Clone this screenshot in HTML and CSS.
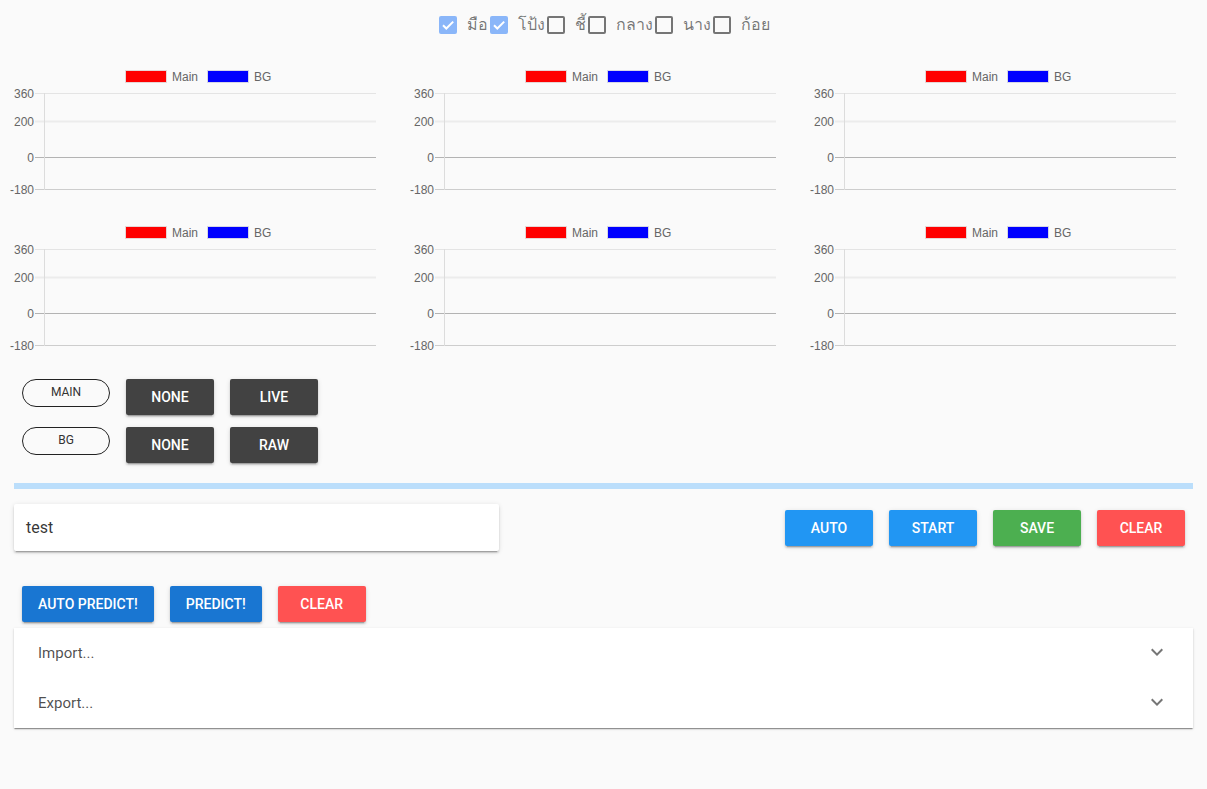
FILE: index.html
```html
<!DOCTYPE html>
<html>
<head>
<meta charset="utf-8">
<link rel="stylesheet" href="styles.css">
</head>
<body>
<div class="app">
  <div class="checks">
    <label class="cb"><span class="box on"><svg viewBox="0 0 18 18"><path d="M4 9.2l3.3 3.3L14.2 5.6" fill="none" stroke="#fff" stroke-width="2"/></svg></span><span class="lbl">มือ</span></label>
    <label class="cb"><span class="box on"><svg viewBox="0 0 18 18"><path d="M4 9.2l3.3 3.3L14.2 5.6" fill="none" stroke="#fff" stroke-width="2"/></svg></span><span class="lbl">โป้ง</span></label>
    <label class="cb"><span class="box"></span><span class="lbl">ชี้</span></label>
    <label class="cb"><span class="box"></span><span class="lbl">กลาง</span></label>
    <label class="cb"><span class="box"></span><span class="lbl">นาง</span></label>
    <label class="cb"><span class="box"></span><span class="lbl">ก้อย</span></label>
  </div>

  <div class="charts" id="charts"></div>

  <div class="controls">
    <div class="crow">
      <div class="pill">MAIN</div>
      <button class="btn dark">NONE</button>
      <button class="btn dark">LIVE</button>
    </div>
    <div class="crow">
      <div class="pill">BG</div>
      <button class="btn dark">NONE</button>
      <button class="btn dark">RAW</button>
    </div>
  </div>

  <div class="content">
    <div class="divider"></div>
    <div class="frow">
      <div class="field">test</div>
      <div class="actions">
        <button class="btn blue">AUTO</button>
        <button class="btn blue">START</button>
        <button class="btn green">SAVE</button>
        <button class="btn red">CLEAR</button>
      </div>
    </div>
    <div class="prow">
      <button class="btn navy">AUTO PREDICT!</button>
      <button class="btn navy">PREDICT!</button>
      <button class="btn red">CLEAR</button>
    </div>
    <div class="panels">
      <div class="panel"><span>Import...</span><svg class="chev" viewBox="0 0 24 24"><path d="M16.59 8.59L12 13.17 7.41 8.59 6 10l6 6 6-6z"/></svg></div>
      <div class="panel"><span>Export...</span><svg class="chev" viewBox="0 0 24 24"><path d="M16.59 8.59L12 13.17 7.41 8.59 6 10l6 6 6-6z"/></svg></div>
    </div>
  </div>
</div>
<script src="app.js"></script>
</body>
</html>
```

FILE: app.js
```js
(function () {
  var chart =
    '<svg class="chart" width="400" height="140" viewBox="0 0 400 140">' +
    '<rect x="125.5" y="10.5" width="41" height="12" fill="#ff0000" stroke="#e6d6d6"/>' +
    '<text x="172" y="21" class="lg">Main</text>' +
    '<rect x="207.5" y="10.5" width="41" height="12" fill="#0000ff" stroke="#d6d6e6"/>' +
    '<text x="254" y="21" class="lg">BG</text>' +
    '<line x1="35" y1="33.5" x2="376" y2="33.5" stroke="#e4e4e4"/>' +
    '<line x1="35" y1="61.5" x2="376" y2="61.5" stroke="#ececec" stroke-width="2"/>' +
    '<line x1="35" y1="97.5" x2="376" y2="97.5" stroke="#b3b3b3"/>' +
    '<line x1="35" y1="129.5" x2="376" y2="129.5" stroke="#cdcdcd"/>' +
    '<line x1="44.5" y1="33" x2="44.5" y2="130" stroke="#dcdcdc"/>' +
    '<text x="34" y="37.5" class="tk">360</text>' +
    '<text x="34" y="65.5" class="tk">200</text>' +
    '<text x="34" y="101.5" class="tk">0</text>' +
    '<text x="34" y="133.5" class="tk">-180</text>' +
    '</svg>';
  var html = '';
  for (var i = 0; i < 6; i++) html += chart;
  document.getElementById('charts').innerHTML = html;
})();
```

FILE: styles.css
```css
html, body {
  margin: 0;
  padding: 0;
  background: #fafafa;
  font-family: Roboto, "Noto Sans", sans-serif;
}
.app {
  width: 1207px;
  padding-bottom: 40px;
}
.checks {
  height: 48px;
  display: flex;
  justify-content: center;
  align-items: center;
  padding-top: 1px;
  padding-left: 4px;
  box-sizing: border-box;
}
.cb {
  display: flex;
  align-items: center;
  margin-right: 2px;
}
.box {
  width: 14px;
  height: 14px;
  border: 2px solid #757575;
  border-radius: 2px;
  display: inline-block;
  position: relative;
}
.box.on {
  background: #8ab6f9;
  border-color: #8ab6f9;
}
.box svg {
  position: absolute;
  left: -2px;
  top: -2px;
  width: 18px;
  height: 18px;
}
.lbl {
  margin-left: 10px;
  font-size: 16px;
  color: rgba(0, 0, 0, 0.54);
}
.charts {
  padding-top: 12px;
  display: grid;
  grid-template-columns: 400px 400px 400px;
  row-gap: 16px;
}
.chart {
  display: block;
}
.chart .lg {
  font-family: "Liberation Sans", Arial, sans-serif;
  font-size: 12px;
  fill: #666;
}
.chart .tk {
  font-family: "Liberation Sans", Arial, sans-serif;
  font-size: 12px;
  fill: #666;
  text-anchor: end;
}
.controls {
  padding: 23px 0 0 22px;
  display: flex;
  flex-direction: column;
  gap: 12px;
}
.crow {
  display: flex;
  align-items: flex-start;
  gap: 16px;
}
.pill {
  width: 88px;
  height: 28px;
  box-sizing: border-box;
  border: 1px solid #222;
  border-radius: 14px;
  display: flex;
  align-items: center;
  justify-content: center;
  font-size: 12px;
  color: #333;
  padding-bottom: 2px;
}
.btn {
  height: 36px;
  min-width: 88px;
  padding: 0 16px;
  border: none;
  border-radius: 2px;
  font-family: Roboto, sans-serif;
  font-size: 14px;
  font-weight: 500;
  color: #fff;
  box-shadow: 0 3px 1px -2px rgba(0,0,0,.2), 0 2px 2px 0 rgba(0,0,0,.14), 0 1px 5px 0 rgba(0,0,0,.12);
  cursor: pointer;
}
.btn.dark { background: #424242; }
.btn.blue { background: #2196f3; }
.btn.green { background: #4caf50; }
.btn.red { background: #ff5252; }
.btn.navy { background: #1976d2; }
.content {
  padding: 20px 14px 0 14px;
}
.divider {
  height: 6px;
  background: #bbdefb;
}
.frow {
  margin-top: 15px;
  display: flex;
  align-items: center;
  justify-content: space-between;
}
.field {
  width: 485px;
  height: 47px;
  box-sizing: border-box;
  background: #fff;
  border-radius: 2px;
  box-shadow: 0 3px 1px -2px rgba(0,0,0,.2), 0 2px 2px 0 rgba(0,0,0,.14), 0 1px 5px 0 rgba(0,0,0,.12);
  padding: 0 12px;
  display: flex;
  align-items: center;
  font-size: 16px;
  color: rgba(0,0,0,.8);
}
.actions {
  display: flex;
  gap: 16px;
  padding-right: 8px;
  padding-top: 1px;
}
.prow {
  margin-top: 35px;
  padding-left: 8px;
  display: flex;
  gap: 16px;
}
.panels {
  margin-top: 6px;
  background: #fff;
  box-shadow: 0 2px 1px -1px rgba(0,0,0,.25), 0 1px 1px 0 rgba(0,0,0,.16), 0 1px 3px 0 rgba(0,0,0,.12);
}
.panel {
  height: 50px;
  padding: 0 24px;
  display: flex;
  align-items: center;
  justify-content: space-between;
  font-size: 15px;
  color: rgba(0,0,0,.7);
}
.chev {
  width: 24px;
  height: 24px;
  fill: rgba(0,0,0,.54);
  margin-top: -2px;
}
```
